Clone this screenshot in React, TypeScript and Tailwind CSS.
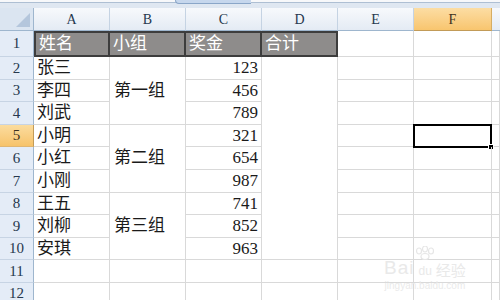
const rows = [
  { name: "张三", amount: 123 },
  { name: "李四", amount: 456 },
  { name: "刘武", amount: 789 },
  { name: "小明", amount: 321 },
  { name: "小红", amount: 654 },
  { name: "小刚", amount: 987 },
  { name: "王五", amount: 741 },
  { name: "刘柳", amount: 852 },
  { name: "安琪", amount: 963 },
];

const groups: Record<number, string> = { 2: "第一组", 5: "第二组", 8: "第三组" };

const cols = ["A", "B", "C", "D", "E", "F"];

const font = "font-['Liberation_Serif','Noto_Sans_CJK_SC',serif]";
const grid = "border-r border-b border-[#d9d9d9]";

function RowHead({ n }: { n: number }) {
  const selected = n === 5;
  return (
    <div
      className={`flex items-center justify-center border-r border-b text-[15px] ${font} ${
        selected
          ? "bg-gradient-to-b from-[#fbdc9e] to-[#f7c36a] border-r-[#c29b58] border-b-[#e0b672] text-[#3b3020]"
          : "bg-[#e4ecf7] border-r-[#9eb6ce] border-b-[#c7d4e4] text-[#26384e]"
      }`}
    >
      {n}
    </div>
  );
}

function Header1({ text, first }: { text: string; first?: boolean }) {
  return (
    <div
      className={`flex items-center bg-[#8e8c8b] border-y-2 border-r-2 border-[#3d3d3d] pl-[3px] text-white text-[17px] ${font} ${
        first ? "border-l-2" : ""
      }`}
    >
      {text}
    </div>
  );
}

export default function App() {
  return (
    <div className="relative w-[500px] h-[300px] overflow-hidden bg-white">
      {/* ribbon edge */}
      <div className="relative h-[8px] bg-[#dfe7f1]">
        <div className="h-[3px] bg-[#f7f8fa] border-b border-[#aebfd3]" />
        <div className="absolute left-[175px] top-0 w-[76px] h-[4px] bg-[#c6d7ed] border-b border-l border-[#8aa6c8] rounded-bl-[4px]" />
      </div>

      <div className="grid grid-cols-[34px_76px_76px_76px_76px_76px_78px_1fr] grid-rows-[23px_26px_repeat(11,22.6px)]">
        {/* column headers */}
        <div className="relative bg-[#dbe5f1] border-r border-b border-[#9eb6ce]">
          <svg className="absolute right-[3px] bottom-[3px]" width="14" height="14" viewBox="0 0 14 14">
            <polygon points="14,0 14,14 0,14" fill="#b4c6dc" />
          </svg>
        </div>
        {cols.map((c) => (
          <div
            key={c}
            className={`flex items-center justify-center border-r border-b text-[14px] ${font} ${
              c === "F"
                ? "bg-gradient-to-b from-[#fcdda3] to-[#f8c56e] border-r-[#d6ad62] border-b-[#c29b58] text-[#3b3020]"
                : "bg-gradient-to-b from-[#f7f9fc] to-[#e4ebf4] border-r-[#c5d3e3] border-b-[#9eb6ce] text-[#26384e]"
            }`}
          >
            {c}
          </div>
        ))}
        <div className="bg-gradient-to-b from-[#f7f9fc] to-[#e4ebf4] border-b border-[#9eb6ce]" />

        {/* row 1 */}
        <RowHead n={1} />
        <Header1 text="姓名" first />
        <Header1 text="小组" />
        <Header1 text="奖金" />
        <Header1 text="合计" />
        <div className={grid} />
        <div className={grid} />
        <div className={grid} />

        {/* data rows */}
        {rows.map((r, i) => {
          const n = i + 2;
          return [
            <RowHead key={`h${n}`} n={n} />,
            <div key={`a${n}`} className={`${grid} flex items-center pl-[3px] text-[17px] text-[#1a1a1a] ${font}`}>
              {r.name}
            </div>,
            groups[n] ? (
              <div
                key={`b${n}`}
                className={`${grid} row-span-3 flex items-center pl-[4px] text-[17px] text-[#1a1a1a] ${font}`}
              >
                {groups[n]}
              </div>
            ) : null,
            <div
              key={`c${n}`}
              className={`${grid} flex items-center justify-end pr-[3px] text-[17px] text-[#1a1a1a] ${font}`}
            >
              {r.amount}
            </div>,
            n === 2 ? <div key={`d${n}`} className={`${grid} row-span-9`} /> : null,
            <div key={`e${n}`} className={grid} />,
            <div key={`f${n}`} className={`${grid} relative`}>
              {n === 5 && (
                <div className="absolute -left-[1px] -top-[1px] w-[79px] h-[24px] border-2 border-black">
                  <div className="absolute -right-[4px] -bottom-[4px] w-[6px] h-[6px] bg-black border border-white" />
                </div>
              )}
            </div>,
            <div key={`g${n}`} className={grid} />,
          ];
        })}

        {[11, 12].map((n) => [
          <RowHead key={`h${n}`} n={n} />,
          <div key={`a${n}`} className={grid} />,
          <div key={`b${n}`} className={grid} />,
          <div key={`c${n}`} className={grid} />,
          <div key={`d${n}`} className={grid} />,
          <div key={`e${n}`} className={grid} />,
          <div key={`f${n}`} className={grid} />,
          <div key={`g${n}`} className={grid} />,
        ])}
      </div>

      {/* watermark */}
      <div className="absolute left-[384px] top-[246px] flex flex-col items-center text-[#e9e9e9] pointer-events-none">
        <svg width="22" height="14" viewBox="0 0 22 14" className="mb-[-2px]">
          <ellipse cx="5" cy="5" rx="2.5" ry="3" fill="none" stroke="#e6e6e6" strokeWidth="1.2" />
          <ellipse cx="11" cy="3" rx="2.5" ry="3" fill="none" stroke="#e6e6e6" strokeWidth="1.2" />
          <ellipse cx="17" cy="5" rx="2.5" ry="3" fill="none" stroke="#e6e6e6" strokeWidth="1.2" />
          <ellipse cx="11" cy="10.5" rx="4" ry="3" fill="none" stroke="#e6e6e6" strokeWidth="1.2" />
        </svg>
        <div className="flex items-end gap-[4px] leading-none">
          <span className="text-[19px] font-['Liberation_Sans',sans-serif] tracking-[1px]">Bai</span>
          <span className="text-[12px] font-['Liberation_Sans',sans-serif]">du</span>
          <span className="text-[15px] font-['Noto_Sans_CJK_SC',sans-serif]">经验</span>
        </div>
        <div className="mt-[4px] text-[10px] leading-none text-[#eaeaea] font-['Liberation_Sans',sans-serif]">
          jingyan.baidu.com
        </div>
      </div>
    </div>
  );
}
